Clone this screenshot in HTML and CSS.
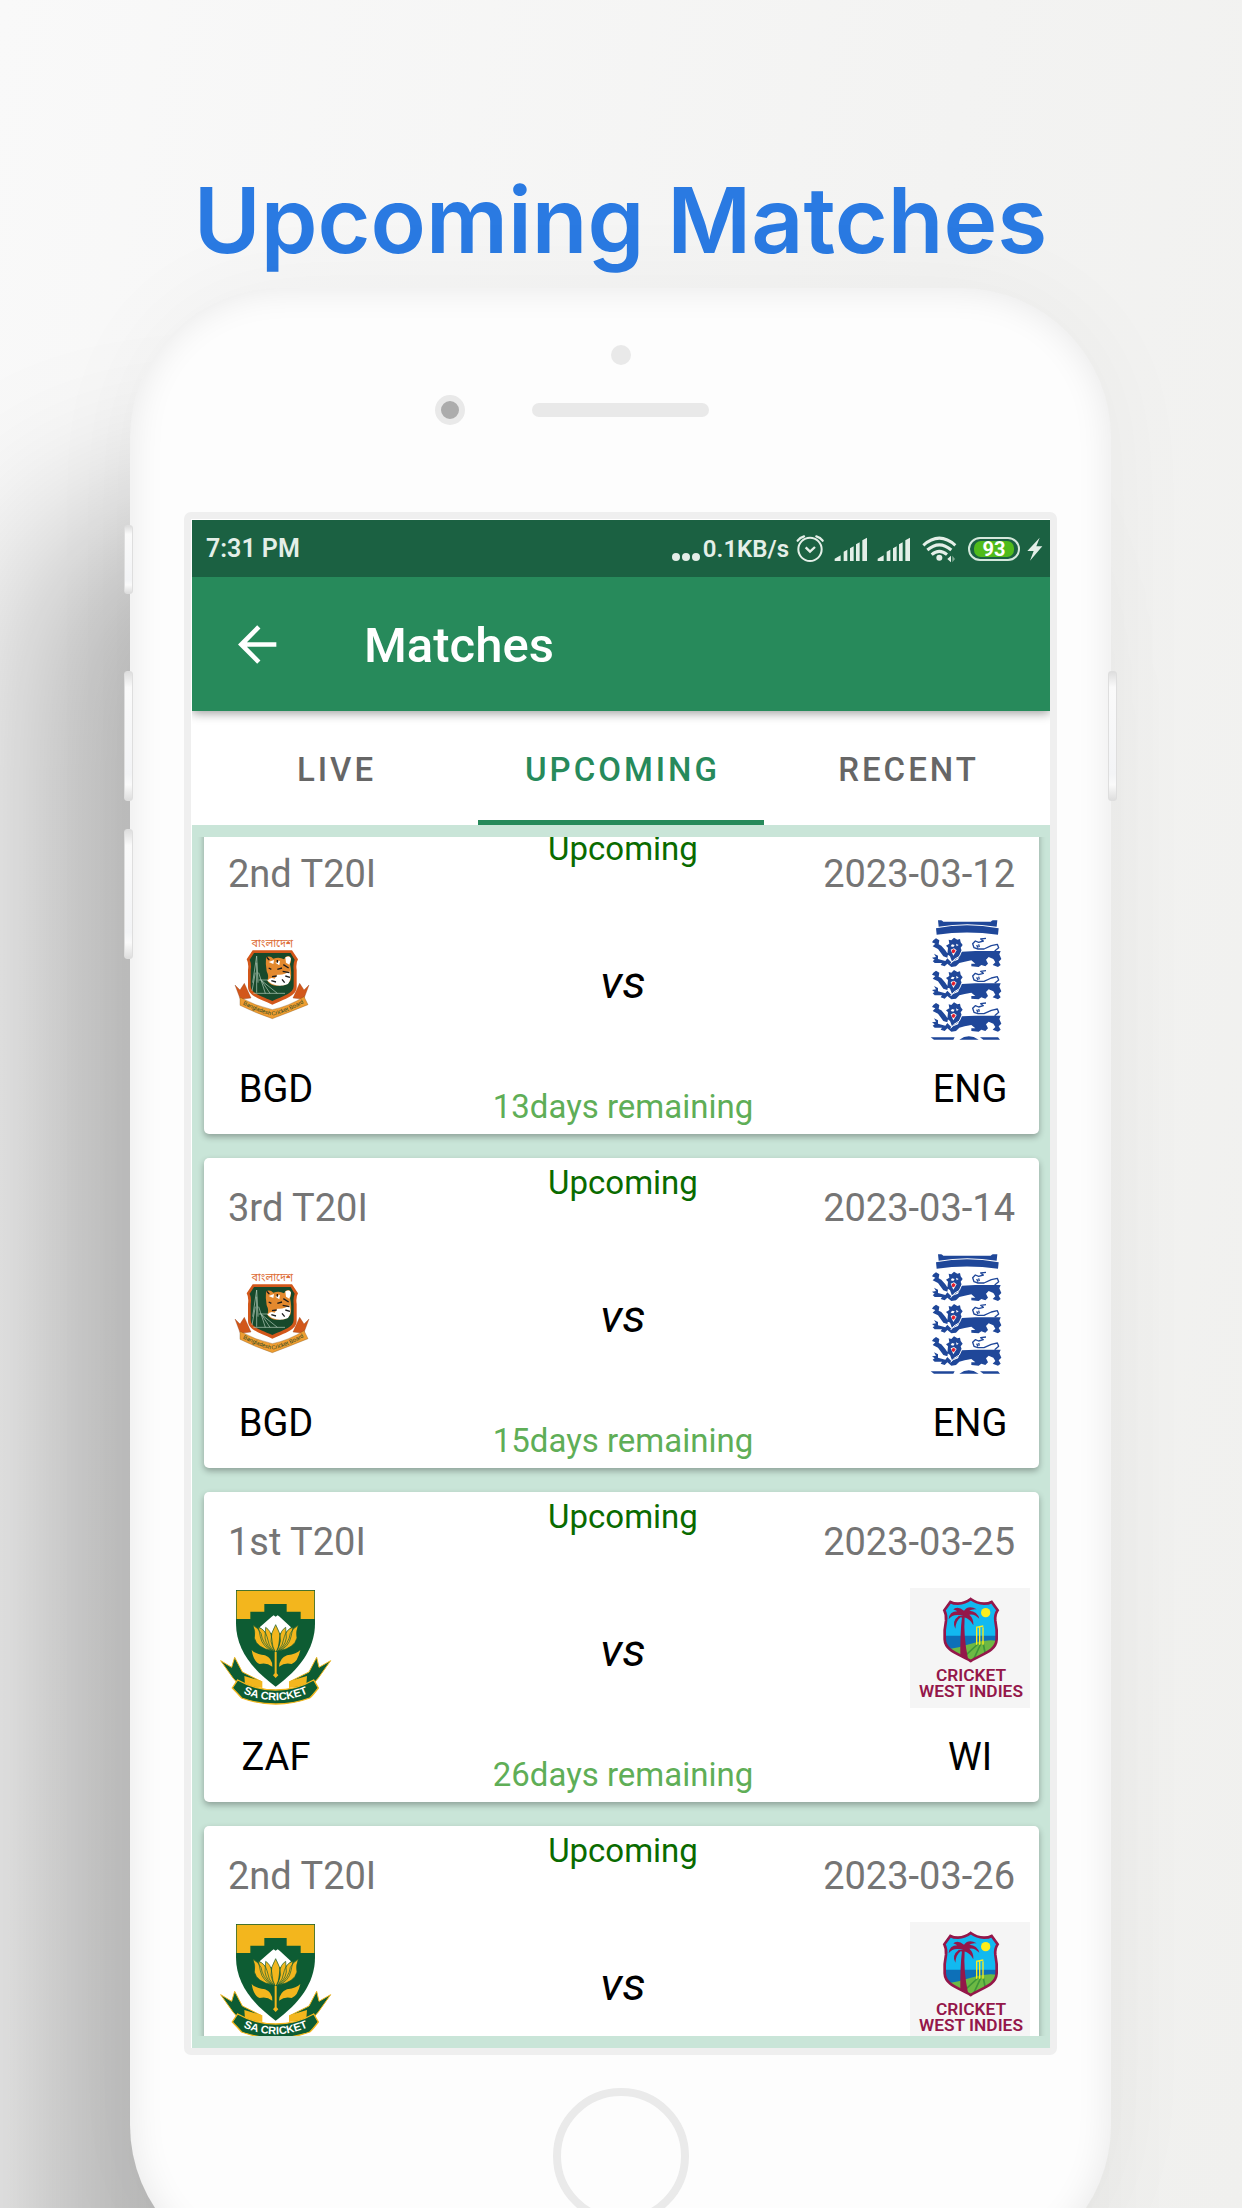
FILE: index.html
```html
<!DOCTYPE html>
<html lang="en">
<head>
<meta charset="utf-8">
<meta name="viewport" content="width=device-width, initial-scale=1">
<title>Upcoming Matches</title>
<link rel="stylesheet" href="styles.css">
</head>
<body>
<svg class="sprite" aria-hidden="true">
  <symbol id="signal" viewBox="582 78 102 72">
    <path fill="#e4efe8" d="M584 150v-7l18-10v17zM611 150v-28l11-6v34zM630 150v-38l11-6v44zM648 150v-50l11-6v56zM667 150v-62l14-8v70z"/>
  </symbol>

  <symbol id="logo-bgd" viewBox="78 312 360 360">
    <text x="247" y="393" text-anchor="middle" font-size="32" font-family="Noto Sans Bengali, Noto Sans, sans-serif" fill="#dd6b35">বাংলাদেশ</text>
    <path fill="#d2571a" stroke="#8d3a12" stroke-width="1" d="M135 507l15 15 13-20 20 44-32 4zM357 507l-15 15-13-20-20 44 32 4z"/>
    <path fill="#d2571a" d="M188 403H306L324 430Q317 442 320 462V512C320 540 285 548 247 566C209 548 174 540 174 512V462Q177 442 170 430Z"/>
    <path fill="#17492b" d="M192 411H302L314 431Q309 444 311 462V510C311 532 282 539 247 555C212 539 182 532 182 510V462Q185 444 179 431Z"/>
    <path fill="none" stroke="#b9d0c0" stroke-width="2" d="M200 420L188 500M200 420L204 500M200 440V530M190 532H285M206 470L226 532M212 490L240 532M215 494L262 532M196 470L186 525M206 492H240"/>
    <path fill="#e3892e" d="M228 424Q240 418 250 428Q268 422 282 430Q290 416 300 422Q306 434 300 444Q306 470 302 492Q292 510 274 508Q244 514 232 494Q238 482 230 466Q226 446 228 424Z"/>
    <path fill="#fff" d="M262 476Q284 478 298 466Q306 490 294 504Q270 514 246 504L232 494Q240 482 254 488ZM286 424Q300 418 303 428L298 446L288 440ZM236 438L252 432 250 444ZM256 440L270 434 268 448Z"/>
    <path fill="none" stroke="#1c1c1c" stroke-width="4" d="M230 424L238 432M236 456L244 460M262 460L276 456M246 482L260 480M280 446L296 456M278 466L298 470M286 480L300 484M262 432V440M244 494L258 498M276 490L284 500"/>
    <path fill="#ee9d31" stroke="#7c4b12" stroke-width="1" d="M150 544Q196 570 247 581Q298 570 342 542L354 566Q300 588 247 608Q194 590 150 568Z"/>
    <path id="bgd-arc" fill="none" d="M150 560Q200 588 247 599Q296 588 350 556"/>
    <text font-family="Liberation Sans, sans-serif" font-size="17" fill="#1d4425"><textPath href="#bgd-arc" startOffset="50%" text-anchor="middle">Bangladesh Cricket Board</textPath></text>
  </symbol>

  <symbol id="lion" viewBox="60 105 220 100">
    <path fill="#1f4799" d="M70 118L78 112 88 118 86 130 94 134 106 148 114 160 112 170 100 166 84 144 68 136 76 128 66 124ZM116 116L124 118 132 110 142 116 150 114 152 124 158 132 152 140 156 152 148 168 136 176 126 182 120 166 112 160 114 140 108 134 118 128ZM66 170L78 168 72 158 84 164 84 174 106 180 112 172 124 184 144 176 156 152 196 150 272 150 268 160 274 174 266 182 272 192 264 198 248 192 256 184 250 174 236 168 228 176 234 188 226 196 214 192 206 198 184 196 184 188 196 188 184 178 164 182 148 186 138 196 124 198 112 188 104 196 92 192 96 186 74 186 68 180 74 176Z"/>
    <path fill="none" stroke="#1f4799" stroke-width="4" stroke-linejoin="round" d="M228 112L212 114 220 120 206 124 196 120 188 128 192 140 204 144 222 144 244 134 262 130 266 140 254 150M206 130L208 138M200 132L204 140"/>
    <path fill="#fff" d="M126 130l8 2-4 6-8-2zM138 128l8 4-6 4zM122 146l10-4 8 6-10 16z"/>
    <path fill="#e3202f" d="M125 148l6-4 6 5-5 8-6-2z"/>
    <path fill="none" stroke="#fff" stroke-width="3" d="M122 188L132 176 148 166 156 148"/>
  </symbol>

  <symbol id="logo-eng" viewBox="0 57 360 360">
    <path fill="#1f4799" d="M84 58H262L260 77Q170 62 86 77ZM78 82Q170 64 266 82L264 101Q170 88 80 101Z"/>
    <path fill="#fff" d="M94 57h154l-6 5H100z"/>
    <use href="#lion" x="60" y="105" width="220" height="100"/>
    <use href="#lion" x="60" y="202" width="220" height="100"/>
    <use href="#lion" x="60" y="299" width="220" height="100"/>
    <path fill="#1f4799" d="M62 409H134L130 416H72ZM148 416Q176 396 206 416ZM210 409H264L270 416H220Z"/>
  </symbol>

  <symbol id="logo-zaf" viewBox="33 54 360 360">
    <path fill="#0d5c33" stroke="#f3b61d" stroke-width="3" d="M47 272L80 292 89 262 112 306 168 334 166 350 110 354 84 324ZM377 272L342 292 335 262 312 306 256 334 258 350 314 354 340 324Z"/>
    <path fill="#f3b61d" d="M118 318L172 334V354L120 344ZM306 318L252 334V354L304 344Z"/>
    <path fill="#0d5c33" stroke="#fff" stroke-width="8" d="M93 62H330V160C330 240 280 300 212 350C144 300 93 240 93 160Z"/>
    <path fill="#0d5c33" d="M93 60H330V160C330 240 280 300 212 350C144 300 93 240 93 160Z"/>
    <path fill="#f3b61d" d="M95 62H328V147H287V125H245V102H178V125H136V147H95Z"/>
    <path fill="#fff" d="M164 172L200 140 206 136 212 140 218 136 224 140 258 172 240 190H184Z"/>
    <path fill="#f3b61d" stroke="#0d5c33" stroke-width="2" d="M144 166Q160 174 168 190Q172 220 200 242Q156 234 148 204Q152 186 144 166ZM280 166Q264 174 256 190Q252 220 224 242Q268 234 276 204Q272 186 280 166ZM160 172Q180 178 186 200Q190 228 206 244Q172 232 166 200ZM264 172Q244 178 238 200Q234 228 218 244Q252 232 258 200ZM182 172Q198 182 200 204Q202 232 210 246Q184 230 180 204ZM242 172Q226 182 224 204Q222 232 214 246Q240 230 244 204ZM212 164Q228 190 226 214Q222 236 212 248Q202 236 198 214Q196 190 212 164Z"/>
    <path fill="#f3b61d" d="M209 246H215V310L220 316 212 324 204 316 209 310ZM140 240Q150 252 180 256Q202 264 202 290Q184 276 164 282Q146 276 140 240ZM286 240Q276 252 246 256Q224 264 222 290Q240 276 260 282Q278 276 286 240Z"/>
    <path fill="#0d5c33" stroke="#f3b61d" stroke-width="4" d="M98 330Q150 360 212 360Q274 360 326 330L340 354Q320 380 314 384Q266 402 212 402Q158 402 110 384Q96 368 82 354Z"/>
    <path id="zaf-arc" fill="none" d="M108 366Q160 391 212 391Q264 391 316 366"/>
    <text font-family="Liberation Sans, sans-serif" font-size="33" font-weight="700" fill="#fff"><textPath href="#zaf-arc" startOffset="50%" text-anchor="middle">SA CRICKET</textPath></text>
  </symbol>

  <symbol id="logo-wi" viewBox="30 54 360 360">
    <path fill="#f5f5f5" d="M30 54H390V414H30Z"/>
    <path fill="#12b9f0" d="M134 86H290V200H134Z"/>
    <path fill="#0d70b8" d="M134 197H290V240H134Z"/>
    <path fill="#6db944" d="M134 240Q180 232 210 222Q250 208 290 212V272H134Z"/>
    <path fill="none" stroke="#3f9638" stroke-width="5" d="M234 222L190 262M242 222L222 266M250 222L256 252"/>
    <circle cx="257" cy="128" r="14" fill="#fdee1c"/>
    <path fill="none" stroke="#fdee1c" stroke-width="4" d="M230 224V172M239 224V168M249 224V172M228 172L250 168"/>
    <path fill="#94174a" d="M181 262Q180 190 186 140H194Q190 200 204 266ZM190 138Q160 128 146 148Q148 124 172 124Q160 116 158 120Q172 106 192 122Q206 104 230 118Q216 116 208 122Q232 124 238 146Q222 130 208 134Q222 146 220 166Q210 146 192 142Q188 144 182 142Q168 152 166 176Q154 154 176 138Z"/>
    <path fill="#f5f5f5" fill-rule="evenodd" d="M120 76H306V284H120ZM212 86Q230 99 252 100Q266 100 275 95L294 121Q284 134 286 152Q292 180 290 208C288 244 246 252 212 274C178 252 136 244 134 208Q132 180 138 152Q140 134 132 121L151 95Q160 100 174 100Q196 99 212 86Z"/>
    <path fill="none" stroke="#94174a" stroke-width="8" d="M212 87Q230 100 252 101Q266 101 275 96L293 121Q284 134 286 152Q292 180 290 208C288 244 246 252 212 273C178 252 136 244 134 208Q132 180 138 152Q140 134 133 121L151 96Q160 101 174 101Q196 100 212 87Z"/>
    <g fill="#94174a" font-family="Roboto, sans-serif" font-size="52" font-weight="600" text-anchor="middle"><text x="213" y="334">CRICKET</text><text x="213" y="382">WEST INDIES</text></g>
  </symbol>
</svg>

<main class="page">
  <h1 class="headline">Upcoming Matches</h1>

  <div class="phone">
    <span class="key key-mute"></span>
    <span class="key key-up"></span>
    <span class="key key-down"></span>
    <span class="key key-power"></span>

    <div class="phone-top">
      <span class="sensor"></span>
      <div class="earpiece">
        <span class="camera"></span>
        <span class="speaker"></span>
      </div>
    </div>

    <div class="bezel">
      <div class="screen">
        <div class="status">
          <span class="status-time">7:31 PM</span>
          <svg class="dots" viewBox="0 0 28 8" width="28" height="8"><g fill="#e4efe8"><circle cx="4" cy="4" r="4"/><circle cx="14" cy="4" r="4"/><circle cx="24" cy="4" r="4"/></g></svg>
          <span class="status-rate">0.1KB/s</span>
          <svg class="alarm" viewBox="465 72 90 90" width="30" height="30"><g fill="none" stroke="#e4efe8"><circle cx="510" cy="118" r="35" stroke-width="6"/><path stroke-width="7" stroke-linecap="round" d="M473 92Q480 82 492 79M548 92Q541 82 529 79"/><path stroke-width="7" d="M497 112l13 13 15-14"/></g></svg>
          <svg class="signal" width="34" height="24"><use href="#signal"/></svg>
          <svg class="signal" width="34" height="24"><use href="#signal"/></svg>
          <svg class="wifi" viewBox="846 76 105 84" width="35" height="28"><g fill="none" stroke="#e4efe8" stroke-width="9"><path d="M850 107Q898 64 946 107M862 121Q898 90 934 121M875 135Q898 115 921 135"/></g><circle cx="898" cy="144" r="9" fill="#e4efe8"/><path fill="#e4efe8" d="M922 148l11-10v20z"/><path fill="#7fa892" d="M937 138l8 10-8 10z"/></svg>
          <span class="battery"><span class="battery-level">93</span></span>
          <svg class="bolt" viewBox="1162 80 48 72" width="16" height="24"><path fill="#e4efe8" d="M1200 82L1163 122h19l-11 29 37-43h-18z"/></svg>
        </div>

        <header class="appbar">
          <button class="back" type="button" aria-label="Back">
            <svg viewBox="174 372 118 116" width="39" height="39"><path fill="none" stroke="#fff" stroke-width="14" d="M290 430H184M237 377L184 430 237 483"/></svg>
          </button>
          <h2 class="appbar-title">Matches</h2>
        </header>

        <div class="tabs" role="tablist">
          <button class="tab" type="button" role="tab" aria-selected="false">LIVE</button>
          <button class="tab tab-active" type="button" role="tab" aria-selected="true">UPCOMING</button>
          <button class="tab" type="button" role="tab" aria-selected="false">RECENT</button>
        </div>

        <div class="matches">
          <div class="match-scroll">
            <div class="match-list">
              <article class="match">
                <div class="side">
                  <p class="meta">2nd T20I</p>
                  <div class="team"><svg class="logo"><use href="#logo-bgd"/></svg><p class="code">BGD</p></div>
                </div>
                <div class="middle"><p class="state">Upcoming</p><p class="versus">vs</p><p class="remaining">13days remaining</p></div>
                <div class="side side-right">
                  <p class="meta">2023-03-12</p>
                  <div class="team"><svg class="logo"><use href="#logo-eng"/></svg><p class="code">ENG</p></div>
                </div>
              </article>
              <article class="match">
                <div class="side">
                  <p class="meta">3rd T20I</p>
                  <div class="team"><svg class="logo"><use href="#logo-bgd"/></svg><p class="code">BGD</p></div>
                </div>
                <div class="middle"><p class="state">Upcoming</p><p class="versus">vs</p><p class="remaining">15days remaining</p></div>
                <div class="side side-right">
                  <p class="meta">2023-03-14</p>
                  <div class="team"><svg class="logo"><use href="#logo-eng"/></svg><p class="code">ENG</p></div>
                </div>
              </article>
              <article class="match">
                <div class="side">
                  <p class="meta">1st T20I</p>
                  <div class="team"><svg class="logo"><use href="#logo-zaf"/></svg><p class="code">ZAF</p></div>
                </div>
                <div class="middle"><p class="state">Upcoming</p><p class="versus">vs</p><p class="remaining">26days remaining</p></div>
                <div class="side side-right">
                  <p class="meta">2023-03-25</p>
                  <div class="team"><svg class="logo"><use href="#logo-wi"/></svg><p class="code">WI</p></div>
                </div>
              </article>
              <article class="match">
                <div class="side">
                  <p class="meta">2nd T20I</p>
                  <div class="team"><svg class="logo"><use href="#logo-zaf"/></svg></div>
                </div>
                <div class="middle"><p class="state">Upcoming</p><p class="versus">vs</p></div>
                <div class="side side-right">
                  <p class="meta">2023-03-26</p>
                  <div class="team"><svg class="logo"><use href="#logo-wi"/></svg></div>
                </div>
              </article>
            </div>
          </div>
        </div>
      </div>
    </div>

    <button class="home" type="button" aria-label="Home"></button>
  </div>
</main>
</body>
</html>
```
FILE: styles.css
```css
* {
  box-sizing: border-box;
}

body {
  margin: 0;
  font-family: Roboto, "Noto Sans", sans-serif;
}

p,
h1,
h2 {
  margin: 0;
}

button {
  border: 0;
  padding: 0;
  background: none;
  font-family: inherit;
}

.sprite {
  display: none;
}

.page {
  height: 100vh;
  overflow: hidden;
  padding: 169px 131px 0 130px;
  background: linear-gradient(100deg, #f9f9f9 0%, #f3f3f2 60%, #f0f0ee 100%);
}

.headline {
  margin: 0 -60px 17px;
  font: 600 91px/102px Inter, sans-serif;
  color: #2a7ae2;
  text-align: center;
}

/* Handset */

.phone {
  position: relative;
  display: flex;
  flex-direction: column;
  padding-bottom: 51px;
  border-radius: 150px;
  background: #fdfdfd;
  box-shadow:
    inset 0 0 36px rgba(0, 0, 0, 0.09),
    -120px 210px 170px -10px rgba(0, 0, 0, 0.26),
    0 0 100px rgba(0, 0, 0, 0.04);
}

.key {
  position: absolute;
  left: -6px;
  width: 9px;
  height: 130px;
  border: 1px solid #dedede;
  border-radius: 3px;
  background: linear-gradient(#dedede, #fafafa 12%, #f3f4f6 80%, #fafafa 88%, #dedede);
}

.key-mute {
  top: 237px;
  height: 69px;
}

.key-up {
  top: 383px;
}

.key-down {
  top: 541px;
}

.key-power {
  top: 383px;
  left: auto;
  right: -6px;
}

.phone-top {
  display: flex;
  flex-direction: column;
  gap: 30px;
  padding: 57px 0 87px;
}

.sensor {
  align-self: center;
  width: 20px;
  height: 20px;
  border-radius: 50%;
  background: #e9e9e9;
}

.earpiece {
  display: grid;
  grid-template-columns: 1fr 177px 1fr;
  align-items: center;
}

.camera {
  justify-self: end;
  width: 30px;
  height: 30px;
  margin-right: 67px;
  border: 6px solid #e9e9e9;
  border-radius: 50%;
  background: #acacac;
}

.speaker {
  height: 14px;
  border-radius: 7px;
  background: #e9e9e9;
}

.bezel {
  margin: 0 54px;
  padding: 1px 0 0 1px;
  border: 7px solid #efefef;
  border-radius: 7px;
  background: #fff;
}

.home {
  align-self: center;
  width: 136px;
  height: 136px;
  margin-top: 33px;
  border: 8px solid #eaeaea;
  border-radius: 50%;
}

/* App screen */

.screen {
  display: flex;
  flex-direction: column;
  aspect-ratio: 858 / 1528;
  overflow: hidden;
  background: #c9e5d8;
}

.status {
  position: relative;
  z-index: 1;
  display: flex;
  align-items: center;
  height: 57px;
  flex: none;
  padding: 1px 7px 0 14px;
  background: #1b6142;
  color: #e4efe8;
  font-size: 25px;
  font-weight: 600;
  line-height: 30px;
}

.status-time {
  margin-right: auto;
}

.status-rate {
  font-size: 24px;
}

.dots {
  margin: 15px 3px 0 0;
}

.alarm {
  margin: 0 9px 0 6px;
}

.signal {
  margin-right: 9px;
}

.wifi {
  margin: 0 11px 0 2px;
}

.battery {
  display: flex;
  width: 52px;
  height: 24px;
  padding: 2px 4px;
  border: 2px solid #d5e8dc;
  border-radius: 12px;
}

.battery-level {
  flex: 1;
  border-radius: 7px;
  background: #50bb1b;
  color: #fff;
  font-size: 20px;
  font-weight: 700;
  line-height: 17px;
  text-align: center;
}

.bolt {
  margin-left: 7px;
}

.appbar {
  position: relative;
  display: flex;
  align-items: center;
  flex: none;
  height: 134px;
  padding-left: 46px;
  background: #278a5b;
  color: #fff;
  box-shadow: 0 2px 10px rgba(0, 0, 0, 0.4);
}

.back {
  display: flex;
  width: 39px;
}

.appbar-title {
  margin-left: 87px;
  padding-top: 3px;
  font-size: 49px;
  font-weight: 500;
  line-height: 56px;
}

.tabs {
  display: grid;
  grid-template-columns: repeat(3, 1fr);
  flex: none;
  height: 114px;
  background: #fff;
}

.tab {
  padding: 4px 0 0 3px;
  border-top: 5px solid transparent;
  border-bottom: 5px solid transparent;
  color: #666;
  font-size: 33px;
  font-weight: 500;
  line-height: 40px;
  letter-spacing: 3px;
}

.tab-active {
  border-bottom-color: #278a5b;
  color: #278a5b;
}

.matches {
  display: flex;
  flex-direction: column;
  flex: 1;
  min-height: 0;
  padding: 12px 0;
}

.match-scroll {
  flex: 1;
  min-height: 0;
  overflow: hidden;
  padding: 0 11px 0 12px;
}

/* The list stands scrolled a little way down. */
.match-list {
  display: flex;
  flex-direction: column;
  gap: 24px;
  margin-top: -13px;
}

.match {
  display: grid;
  grid-template-columns: 1fr auto 1fr;
  min-height: 310px;
  padding: 0 9px 0 12px;
  border-radius: 5px;
  background: #fff;
  box-shadow: 0 3px 6px rgba(0, 0, 0, 0.3);
}

.side {
  display: flex;
  flex-direction: column;
  align-items: flex-start;
  gap: 23px;
  padding-top: 27px;
}

.side-right {
  align-items: flex-end;
}

.meta {
  padding: 0 15px 0 12px;
  color: #757575;
  font-size: 38px;
  line-height: 46px;
}

.team {
  display: flex;
  flex-direction: column;
  align-items: center;
  gap: 26px;
}

.logo {
  width: 120px;
  height: 120px;
}

.code {
  color: #000;
  font-size: 38px;
  line-height: 46px;
}

.middle {
  padding: 5px 0 7px;
  text-align: center;
}

.state {
  color: #0a6b00;
  font-size: 33px;
  line-height: 40px;
}

.versus {
  margin: 85px 0 77px;
  color: #000;
  font-size: 47px;
  font-style: italic;
  font-weight: 400;
  line-height: 56px;
}

.remaining {
  color: #5fae57;
  font-size: 33px;
  line-height: 40px;
}
```
